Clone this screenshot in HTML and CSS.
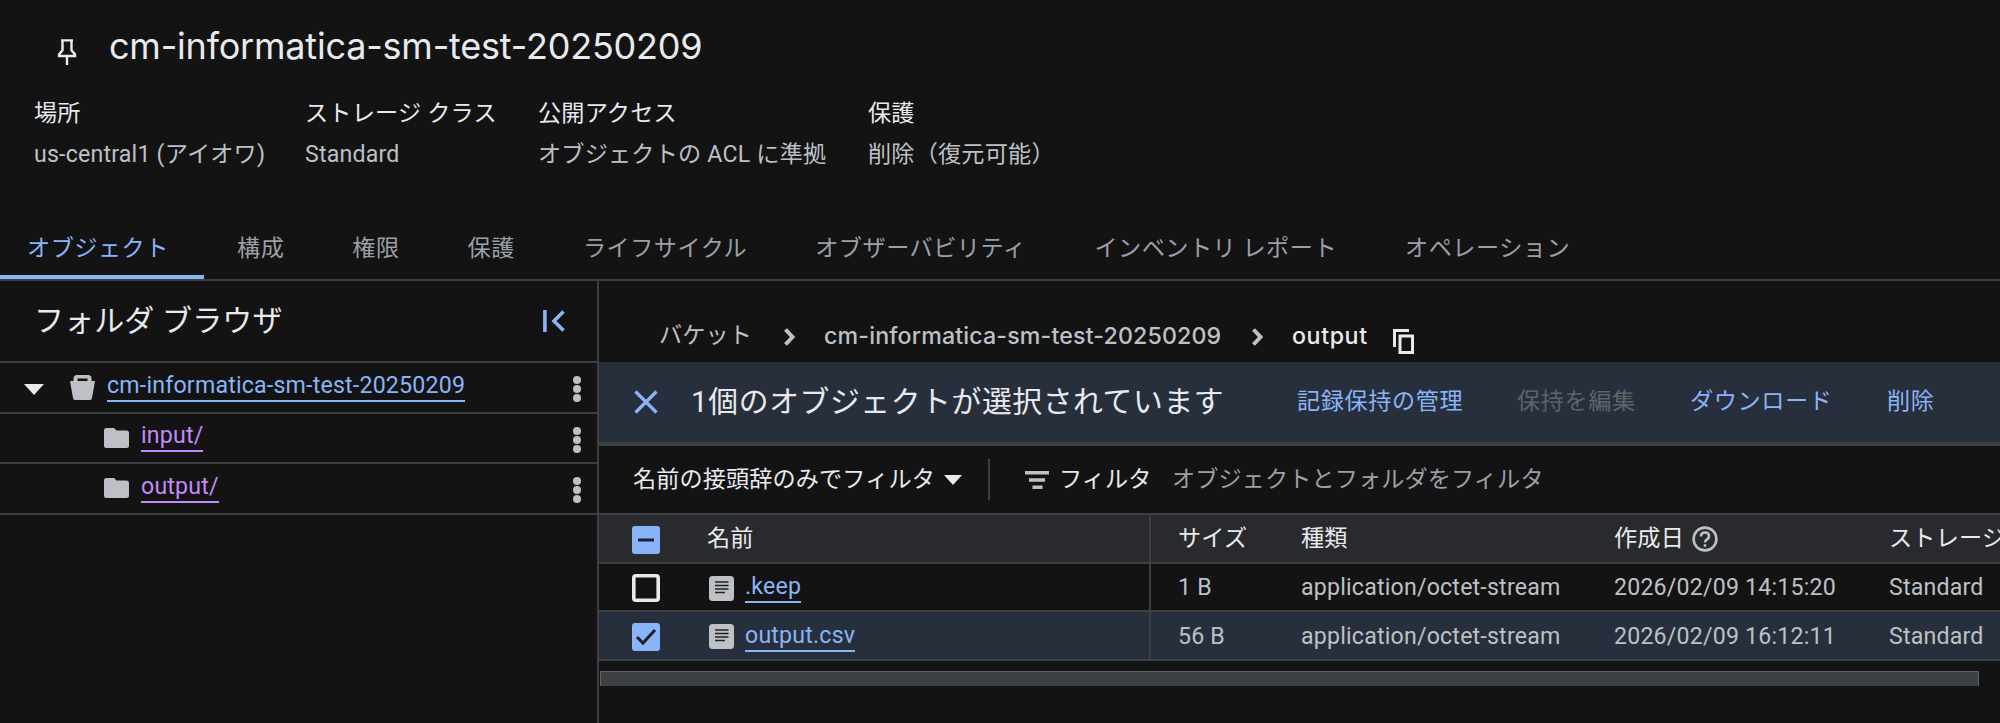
FILE: index.html
```html
<!DOCTYPE html>
<html lang="ja">
<head>
    <meta charset="UTF-8">
    <meta name="viewport" content="width=device-width, initial-scale=1.0">
    <title>cm-informatica-sm-test-20250209</title>
    <link rel="stylesheet" href="styles.css">
</head>
<body>
    <header class="header">
        <div class="title-row">
            <svg class="pin" width="20" height="26" viewBox="0 0 20 26" fill="none" stroke="#e8eaed" stroke-width="2.4">
                <path d="M4 1.400h12M5.500 1.400v10L2 15.500V17h16v-1.500l-3.500-4.100v-10M10 17v9"/>
            </svg>
            <h1>cm-informatica-sm-test-20250209</h1>
        </div>
        <dl class="meta">
            <div class="meta-item location"><dt>場所</dt><dd>us-central1 (アイオワ)</dd></div>
            <div class="meta-item class"><dt>ストレージ クラス</dt><dd>Standard</dd></div>
            <div class="meta-item access"><dt>公開アクセス</dt><dd>オブジェクトの ACL に準拠</dd></div>
            <div class="meta-item"><dt>保護</dt><dd>削除（復元可能）</dd></div>
        </dl>
    </header>

    <nav class="tabs">
        <a class="tab active">オブジェクト</a>
        <a class="tab">構成</a>
        <a class="tab">権限</a>
        <a class="tab">保護</a>
        <a class="tab">ライフサイクル</a>
        <a class="tab">オブザーバビリティ</a>
        <a class="tab">インベントリ レポート</a>
        <a class="tab">オペレーション</a>
    </nav>

    <div class="content">
        <!-- Folder browser -->
        <aside class="sidebar">
            <div class="sidebar-head">
                <h2>フォルダ ブラウザ</h2>
                <svg width="22" height="22" viewBox="0 0 22 22" fill="none" stroke="#8ab4f8" stroke-width="3.6">
                    <path d="M1.900 0v22M20.500 1.500L11 11l9.500 9.500"/>
                </svg>
            </div>
            <div class="tree-row">
                <span class="arrow"></span>
                <svg class="bucket" width="25" height="25" viewBox="0 0 25 25" fill="#bdc1c6">
                    <path fill-rule="evenodd" d="M3.500 6V3.500Q3.500 0 7 0h11q3.500 0 3.500 3.500V6H25l-3 17q-.3 2-2 2H5q-1.700 0-2-2L0 6zM7.500 3.500V6h10V3.500z"/>
                </svg>
                <a class="link">cm-informatica-sm-test-20250209</a>
                <span class="dots"><i></i><i></i><i></i></span>
            </div>
            <div class="tree-row child">
                <svg class="folder" width="25" height="20" viewBox="0 0 25 20" fill="#bdc1c6">
                    <path d="M2.500 0H10l2.500 2.500h10Q25 2.500 25 5v12.500q0 2.500-2.500 2.500h-20Q0 20 0 17.500v-15Q0 0 2.500 0z"/>
                </svg>
                <a class="link visited">input/</a>
                <span class="dots"><i></i><i></i><i></i></span>
            </div>
            <div class="tree-row child">
                <svg class="folder" width="25" height="20" viewBox="0 0 25 20" fill="#bdc1c6">
                    <path d="M2.500 0H10l2.500 2.500h10Q25 2.500 25 5v12.500q0 2.500-2.500 2.500h-20Q0 20 0 17.500v-15Q0 0 2.500 0z"/>
                </svg>
                <a class="link visited">output/</a>
                <span class="dots"><i></i><i></i><i></i></span>
            </div>
        </aside>

        <!-- Object list -->
        <main class="main">
            <div class="breadcrumb">
                <span class="crumb-root">バケット</span>
                <svg class="chevron" width="12" height="18" viewBox="0 0 12 18" fill="none" stroke="#bdc1c6" stroke-width="4"><path d="M1.500 1.500L8.500 9l-7 7.500"/></svg>
                <span class="crumb-bucket">cm-informatica-sm-test-20250209</span>
                <svg class="chevron" width="12" height="18" viewBox="0 0 12 18" fill="none" stroke="#bdc1c6" stroke-width="4"><path d="M1.500 1.500L8.500 9l-7 7.500"/></svg>
                <span class="crumb-current">output</span>
                <svg class="copy" width="21" height="25" viewBox="0 0 21 25" fill="none" stroke="#e8eaed" stroke-width="3">
                    <path d="M1.500 18V1.500H16M7 7h12.500v16.500H7z"/>
                </svg>
            </div>

            <div class="selection">
                <svg class="close" width="24" height="24" viewBox="0 0 24 24" fill="none" stroke="#8ab4f8" stroke-width="3.2"><path d="M1.500 1.500l21 21M22.500 1.500l-21 21"/></svg>
                <span class="selection-text">1個のオブジェクトが選択されています</span>
                <a class="action hold">記録保持の管理</a>
                <a class="action disabled">保持を編集</a>
                <a class="action download">ダウンロード</a>
                <a class="action">削除</a>
            </div>

            <div class="filter">
                <span class="filter-mode">名前の接頭辞のみでフィルタ</span>
                <span class="caret"></span>
                <span class="divider"></span>
                <svg class="filter-icon" width="24" height="18" viewBox="0 0 24 18" fill="#bdc1c6"><path d="M0 0h24v3.500H0zM4 7.200h16v3.500H4zM7.500 14.400h10V18h-10z"/></svg>
                <span class="filter-label">フィルタ</span>
                <span class="placeholder">オブジェクトとフォルダをフィルタ</span>
            </div>

            <div class="table">
                <div class="row head">
                    <div class="cell check">
                        <svg width="28" height="28" viewBox="0 0 28 28"><rect width="28" height="28" rx="3" fill="#8ab4f8"/><path d="M6 14h16" stroke="#202124" stroke-width="3"/></svg>
                    </div>
                    <div class="cell name">名前</div>
                    <div class="cell size">サイズ</div>
                    <div class="cell type">種類</div>
                    <div class="cell created">作成日
                        <svg class="help" width="26" height="26" viewBox="0 0 26 26" fill="none" stroke="#bdc1c6" stroke-width="2.600">
                            <circle cx="13" cy="13" r="11.400"/>
                            <path d="M9 10.500q0-4 4-4t4 3.700q0 1.800-2 3.200t-2 3M13 18.200v2.600"/>
                        </svg>
                    </div>
                    <div class="cell storage">ストレージ クラス</div>
                </div>
                <div class="row">
                    <div class="cell check">
                        <svg width="28" height="28" viewBox="0 0 28 28"><rect x="1.800" y="1.800" width="24.400" height="24.400" rx="2" fill="none" stroke="#e8eaed" stroke-width="3.600"/></svg>
                    </div>
                    <div class="cell name">
                        <svg class="doc" width="25" height="25" viewBox="0 0 25 25"><rect width="25" height="25" rx="3.500" fill="#bdc1c6"/><path d="M6 6h13.500M6 9.500h13.500M6 13h13.500M6 16.500h10" stroke="#202124" stroke-width="1.400"/></svg>
                        <a class="link">.keep</a>
                    </div>
                    <div class="cell size">1 B</div>
                    <div class="cell type">application/octet-stream</div>
                    <div class="cell created">2026/02/09 14:15:20</div>
                    <div class="cell storage">Standard</div>
                </div>
                <div class="row selected">
                    <div class="cell check">
                        <svg width="28" height="28" viewBox="0 0 28 28"><rect width="28" height="28" rx="3" fill="#8ab4f8"/><path d="M5 14l6 6L23 7" fill="none" stroke="#202124" stroke-width="3"/></svg>
                    </div>
                    <div class="cell name">
                        <svg class="doc" width="25" height="25" viewBox="0 0 25 25"><rect width="25" height="25" rx="3.500" fill="#bdc1c6"/><path d="M6 6h13.500M6 9.500h13.500M6 13h13.500M6 16.500h10" stroke="#202124" stroke-width="1.400"/></svg>
                        <a class="link">output.csv</a>
                    </div>
                    <div class="cell size">56 B</div>
                    <div class="cell type">application/octet-stream</div>
                    <div class="cell created">2026/02/09 16:12:11</div>
                    <div class="cell storage">Standard</div>
                </div>
            </div>
            <div class="scrollbar"></div>
        </main>
    </div>
</body>
</html>
```

FILE: styles.css
```css
* {
    box-sizing: border-box;
}
body {
    margin: 0;
    height: 723px;
    overflow: hidden;
    display: flex;
    flex-direction: column;
    background: #131313;
    color: #bdc1c6;
    font-family: Roboto, "Noto Sans CJK JP", sans-serif;
    font-size: 23.15px;
    line-height: 32px;
    letter-spacing: 0.12px;
    white-space: nowrap;
}
h1, h2, dl, dd {
    margin: 0;
    font-weight: 400;
}
svg {
    display: block;
    flex: none;
}

/* Header */
.header {
    height: 214px;
    flex: none;
}
.title-row {
    display: flex;
    align-items: flex-start;
    padding: 22px 0 0 57px;
    height: 98px;
}
.pin {
    margin: 17px 32px 0 0;
}
.title-row h1 {
    color: #e8eaed;
    font-family: Inter, sans-serif;
    font-size: 36px;
    line-height: 48px;
    letter-spacing: -0.2px;
}
.meta {
    display: flex;
    padding-left: 34px;
    letter-spacing: 0.2px;
}
.meta dt {
    color: #e8eaed;
}
.meta dd {
    margin-top: 9px;
}
.location {
    width: 271px;
}
.class {
    width: 233px;
}
.access {
    width: 330px;
}

/* Tabs */
.tabs {
    display: flex;
    flex: none;
    height: 67px;
    border-bottom: 2px solid #3c4043;
    letter-spacing: 0.5px;
}
.tab {
    padding: 19px 34px 0;
    color: #9aa0a6;
}
.tab.active {
    padding-left: 27px;
    padding-right: 0;
    width: 204px;
    margin-right: -1px;
    color: #8ab4f8;
    border-bottom: 4px solid #8ab4f8;
}

.content {
    display: flex;
    flex: 1;
}

/* Folder browser */
.sidebar {
    width: 599px;
    flex: none;
    border-right: 2px solid #3c4043;
}
.sidebar-head {
    display: flex;
    align-items: center;
    justify-content: space-between;
    height: 82px;
    padding: 0 32px 0 34px;
    border-bottom: 2px solid #3c4043;
}
.sidebar-head h2 {
    color: #e8eaed;
    font-size: 30px;
}
.tree-row {
    display: flex;
    align-items: center;
    height: 50.6px;
    padding: 0 16px 0 24px;
    border-bottom: 2px solid #3c4043;
}
.tree-row.child {
    padding-left: 104px;
}
.arrow {
    margin: 4px 26px 0 0;
    border: 10px solid transparent;
    border-top: 11px solid #e8eaed;
    border-bottom: 0;
}
.bucket, .folder {
    margin-right: 12px;
}
.link {
    height: 30px;
    line-height: 28px;
    color: #8ab4f8;
    border-bottom: 2px solid #8ab4f8;
}
.tree-row .link {
    height: 29px;
    line-height: 25px;
    letter-spacing: 0.2px;
}
.link.visited {
    color: #c58af9;
    border-color: #c58af9;
}
.dots {
    display: flex;
    flex-direction: column;
    gap: 1px;
    margin: 4px 0 0 auto;
}
.dots i {
    width: 8px;
    height: 8px;
    border-radius: 50%;
    background: #bdc1c6;
}

/* Breadcrumb */
.main {
    flex: 1;
    min-width: 0;
    overflow: hidden;
}
.breadcrumb {
    display: flex;
    height: 81px;
    padding: 39px 0 0 60px;
}
.chevron {
    margin-top: 8px;
}
.crumb-root {
    width: 125px;
}
.crumb-bucket, .crumb-current {
    margin-left: 28px;
    font-family: Inter, sans-serif;
    font-weight: 500;
    font-size: 23.2px;
    letter-spacing: 0.15px;
}
.crumb-bucket {
    width: 428px;
}
.crumb-current {
    width: 101px;
    color: #e8eaed;
    letter-spacing: 0.6px;
}
.copy {
    margin-top: 9px;
}

/* Selection bar */
.selection {
    display: flex;
    align-items: center;
    height: 84px;
    padding: 0 0 1px 35px;
    background: #282f3c;
    border-bottom: 4px solid #3c4043;
}
.selection-text {
    flex: none;
    width: 606px;
    margin-left: 33px;
    color: #e8eaed;
    font-size: 29.8px;
    letter-spacing: 0.6px;
}
.action {
    flex: none;
    width: 173px;
    color: #8ab4f8;
    letter-spacing: 0.6px;
}
.hold {
    width: 220px;
}
.download {
    width: 197px;
}
.disabled {
    color: #5f6368;
}

/* Filter */
.filter {
    display: flex;
    align-items: center;
    height: 67px;
    padding-left: 34px;
}
.filter-mode, .filter-label {
    color: #e8eaed;
}
.caret {
    margin-left: 9px;
    border: 9px solid transparent;
    border-top: 10px solid #e8eaed;
    border-bottom: 0;
}
.divider {
    width: 2px;
    height: 41px;
    margin: 0 35px 0 26px;
    background: #3c4043;
}
.filter-label {
    width: 113px;
    margin-left: 10px;
}
.placeholder {
    color: #9aa0a6;
}

/* Table */
.table {
    border-top: 2px solid #3c4043;
}
.row {
    display: grid;
    grid-template-columns: 108px 444px 150px 313px 275px 300px;
    height: 48.7px;
    border-bottom: 2px solid #3c4043;
    letter-spacing: 0.2px;
}
.head {
    background: #292a2d;
    color: #e8eaed;
}
.selected {
    background: #282f3c;
}
.cell {
    display: flex;
    align-items: center;
    padding-top: 2px;
}
.check {
    padding-left: 33px;
}
.head .check {
    padding-top: 3px;
}
.name {
    border-right: 2px solid #3c4043;
}
.doc {
    margin: 0 11px 0 2px;
}
.size {
    padding-left: 27px;
}
.help {
    margin-left: 8px;
}

.scrollbar {
    width: 1379px;
    height: 15px;
    margin: 10px 0 0 1px;
    background: #3c4043;
    border: 1px solid #5f6368;
    border-bottom: 0;
}
```
